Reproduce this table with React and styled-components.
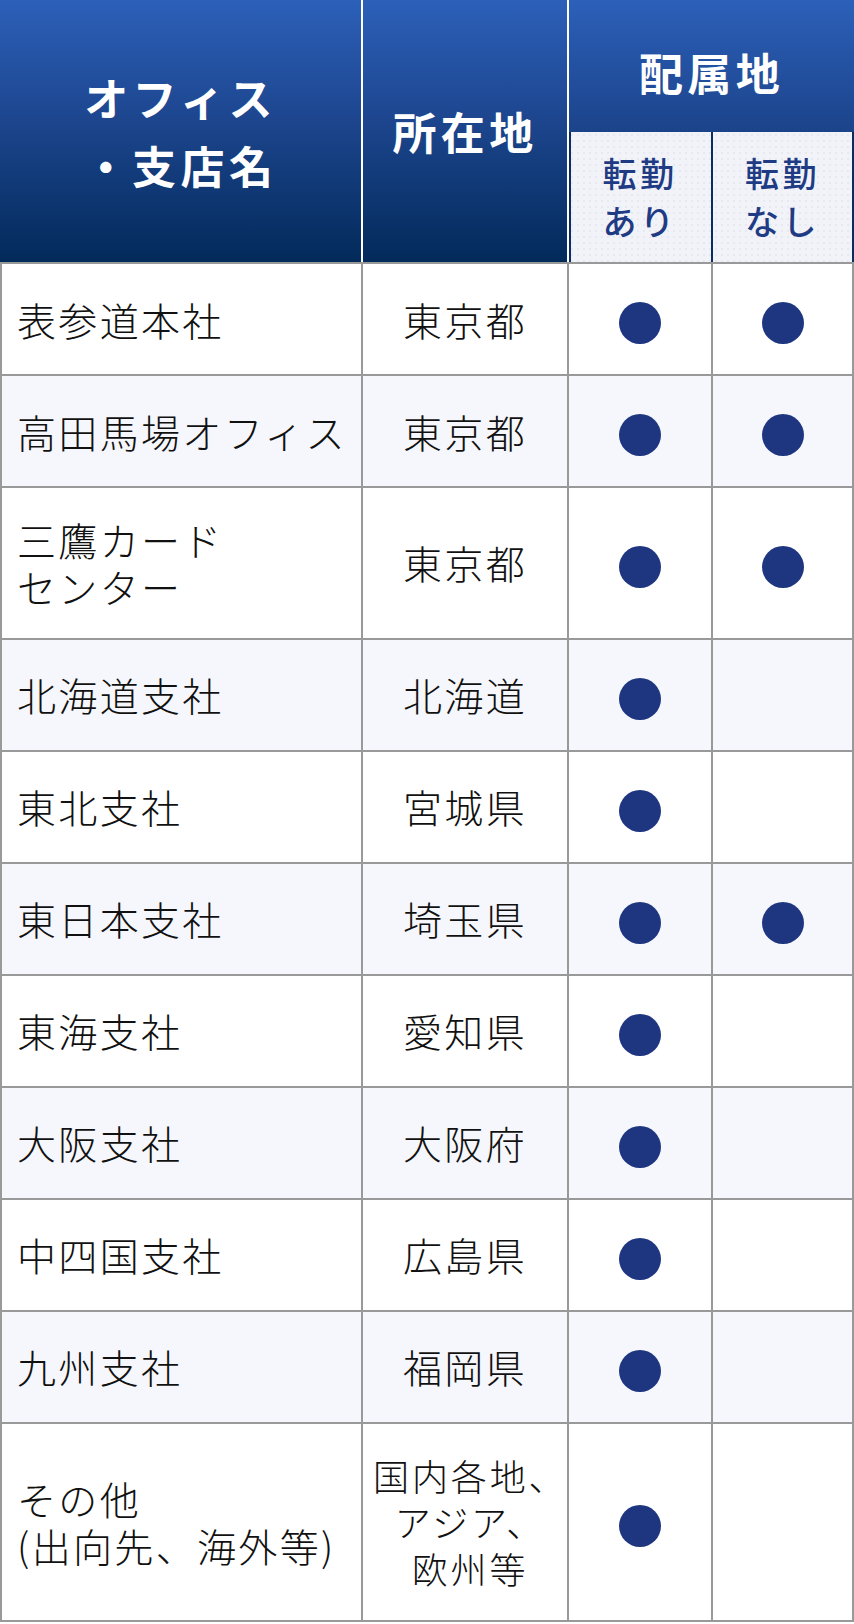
import styled, { createGlobalStyle } from 'styled-components';

const GlobalStyle = createGlobalStyle`
  html, body {
    margin: 0;
    padding: 0;
    background: #fff;
  }

  body {
    font-family: 'Noto Sans CJK JP', 'Noto Sans', sans-serif;
    color: #111;
  }
`;

const offices = [
  { name: ['表参道本社'], place: ['東京都'], move: true, stay: true },
  { name: ['高田馬場オフィス'], place: ['東京都'], move: true, stay: true },
  { name: ['三鷹カード', 'センター'], place: ['東京都'], move: true, stay: true },
  { name: ['北海道支社'], place: ['北海道'], move: true, stay: false },
  { name: ['東北支社'], place: ['宮城県'], move: true, stay: false },
  { name: ['東日本支社'], place: ['埼玉県'], move: true, stay: true },
  { name: ['東海支社'], place: ['愛知県'], move: true, stay: false },
  { name: ['大阪支社'], place: ['大阪府'], move: true, stay: false },
  { name: ['中四国支社'], place: ['広島県'], move: true, stay: false },
  { name: ['九州支社'], place: ['福岡県'], move: true, stay: false },
  {
    name: ['その他', '(出向先、海外等)'],
    place: ['国内各地、', 'アジア、', '欧州等'],
    move: true,
    stay: false,
  },
];

const Table = styled.table`
  width: 854px;
  table-layout: fixed;
  border-spacing: 0;
  border-collapse: separate;
`;

const Col = styled.col`
  width: ${(p) => p.$width}px;
`;

const Head = styled.thead`
  background: linear-gradient(180deg, #2c60b9 0%, #1d468f 45%, #022a5a 100%);
`;

const HeadCell = styled.th`
  padding: 0;
  padding-top: ${(p) => (p.$top ? '12px' : '0')};
  height: ${(p) => (p.$top ? '120px' : 'auto')};
  color: #fff;
  font-size: 44px;
  font-weight: 700;
  line-height: 68px;
  letter-spacing: 0.1em;
  text-align: center;
  vertical-align: middle;
  border-left: ${(p) => (p.$first ? 'none' : '2px solid #fff')};
`;

const SubHeadCell = styled.th`
  height: 130px;
  padding: 0;
  background-color: #f2f3f8;
  background-image: radial-gradient(rgba(180, 188, 210, 0.18) 0.8px, transparent 1px);
  background-size: 6px 6px;
  color: #1f3b84;
  font-size: 34px;
  font-weight: 500;
  line-height: 48px;
  letter-spacing: 0.1em;
  text-align: center;
  vertical-align: middle;
  border-left: 2px solid ${(p) => (p.$first ? '#fff' : '#0b2c60')};
  border-right: ${(p) => (p.$last ? '2px solid #0b2c60' : 'none')};
  box-shadow: ${(p) => (p.$first ? 'inset 2px 0 0 #0b2c60' : 'none')};
`;

const Row = styled.tr`
  background: ${(p) => (p.$tinted ? '#f6f7fc' : '#fff')};

  &:last-child td {
    border-bottom: 2px solid #999;
  }
`;

const Cell = styled.td`
  box-sizing: border-box;
  height: 112px;
  padding: 28px 0;
  border-top: 2px solid #999;
  border-left: 2px solid #999;
  font-size: 39px;
  font-weight: 300;
  line-height: 46.8px;
  letter-spacing: 0.06em;
  vertical-align: middle;
  white-space: nowrap;

  &:last-child {
    border-right: 2px solid #999;
  }
`;

const NameCell = styled(Cell)`
  padding-left: 15px;
  text-align: left;
`;

const PlaceCell = styled(Cell)`
  text-align: center;
  padding-left: ${(p) => (p.$long ? '10px' : '0')};
  font-size: ${(p) => (p.$long ? '36px' : '39px')};
  letter-spacing: ${(p) => (p.$long ? '0.08em' : '0.06em')};
`;

const MarkCell = styled(Cell)`
  text-align: center;
`;

const Dot = styled.span`
  display: inline-block;
  width: 42px;
  height: 42px;
  border-radius: 50%;
  background: #1e3580;
  vertical-align: middle;
`;

const Lines = ({ lines }) =>
  lines.map((line, i) => (
    <span key={line}>
      {i > 0 && <br />}
      {line}
    </span>
  ));

const App = () => (
  <>
    <GlobalStyle />
    <Table>
      <colgroup>
        <Col $width={361} />
        <Col $width={206} />
        <Col $width={144} />
        <Col $width={143} />
      </colgroup>
      <Head>
        <tr>
          <HeadCell rowSpan={2} $first>
            オフィス
            <br />
            ・支店名
          </HeadCell>
          <HeadCell rowSpan={2}>所在地</HeadCell>
          <HeadCell colSpan={2} $top>
            配属地
          </HeadCell>
        </tr>
        <tr>
          <SubHeadCell $first>
            転勤
            <br />
            あり
          </SubHeadCell>
          <SubHeadCell $last>
            転勤
            <br />
            なし
          </SubHeadCell>
        </tr>
      </Head>
      <tbody>
        {offices.map((o, i) => (
          <Row key={o.name.join('')} $tinted={i % 2 === 1}>
            <NameCell>
              <Lines lines={o.name} />
            </NameCell>
            <PlaceCell $long={o.place.length > 1}>
              <Lines lines={o.place} />
            </PlaceCell>
            <MarkCell>{o.move && <Dot />}</MarkCell>
            <MarkCell>{o.stay && <Dot />}</MarkCell>
          </Row>
        ))}
      </tbody>
    </Table>
  </>
);

export default App;
